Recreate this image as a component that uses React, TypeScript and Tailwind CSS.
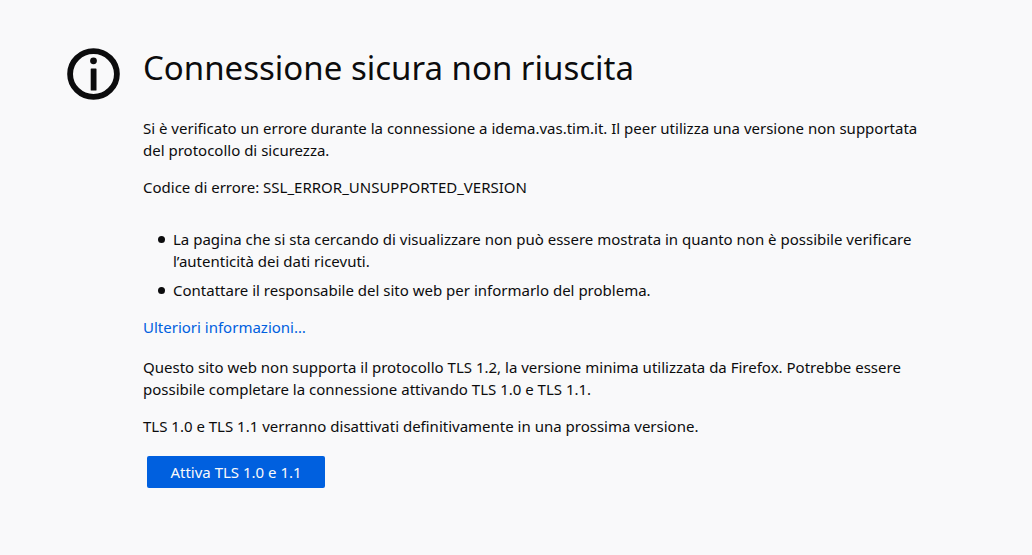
const bulletClass =
  "flex gap-2 before:mt-2 before:h-[7px] before:w-[7px] before:shrink-0 before:rounded-full before:bg-[#0c0c0d] before:content-['']";

export default function App() {
  return (
    <main className="flex min-h-screen justify-center bg-[#f9f9fa] px-12 pt-12 font-['Noto_Sans',sans-serif] text-[15px] leading-[22px] text-[#0c0c0d]">
      <div className="flex w-full max-w-[898px] items-start gap-[23px]">
        <svg className="h-[52px] w-[53px] shrink-0" viewBox="0 0 53 52" aria-hidden="true">
          <ellipse cx="26.5" cy="26" rx="23.4" ry="22.9" fill="none" stroke="#0c0c0d" strokeWidth="5.8" />
          <circle cx="26.5" cy="12.8" r="3.4" fill="#0c0c0d" />
          <rect x="23.7" y="20.4" width="5.8" height="22.2" rx="0.7" fill="#0c0c0d" />
        </svg>
        <div className="min-w-0 max-w-[780px] flex-1">
          <h1 className="text-[33px] leading-10">Connessione sicura non riuscita</h1>
          <p className="mt-[29px]">
            Si è verificato un errore durante la connessione a idema.vas.tim.it. Il peer utilizza una versione non supportata del protocollo di sicurezza.
          </p>
          <p className="mt-[15px]">Codice di errore: SSL_ERROR_UNSUPPORTED_VERSION</p>
          <ul className="mt-[30px] pl-[15px]">
            <li className={bulletClass}>
              <span>
                La pagina che si sta cercando di visualizzare non può essere mostrata in quanto non è possibile verificare l’autenticità dei dati ricevuti.
              </span>
            </li>
            <li className={`mt-[7px] ${bulletClass}`}>
              <span>Contattare il responsabile del sito web per informarlo del problema.</span>
            </li>
          </ul>
          <p className="mt-[15px]">
            <a href="#informazioni" className="text-[#0060df]">Ulteriori informazioni…</a>
          </p>
          <p className="mt-[18px]">
            Questo sito web non supporta il protocollo TLS 1.2, la versione minima utilizzata da Firefox. Potrebbe essere possibile completare la connessione attivando TLS 1.0 e TLS 1.1.
          </p>
          <p className="mt-[15px]">TLS 1.0 e TLS 1.1 verranno disattivati definitivamente in una prossima versione.</p>
          <button type="button" className="mx-1 mt-[19px] h-8 min-w-[178px] rounded-xs bg-[#0060df] px-5 text-[#f9f9fa]">
            Attiva TLS 1.0 e 1.1
          </button>
        </div>
      </div>
    </main>
  );
}
